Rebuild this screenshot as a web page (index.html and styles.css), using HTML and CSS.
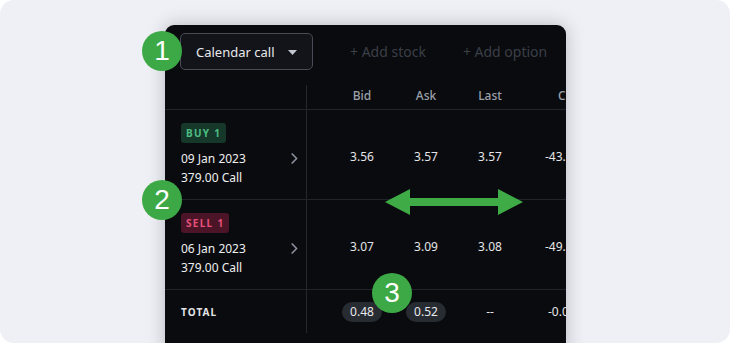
FILE: index.html
```html
<!DOCTYPE html>
<html>
<head>
<meta charset="utf-8">
<link rel="stylesheet" href="styles.css">
</head>
<body>
<div class="frame">
  <div class="panel">
    <div class="toolbar">
      <div class="dropdown">
        <span>Calendar call</span>
        <svg class="caret" width="9" height="5" viewBox="0 0 9 5"><path d="M0 0 H9 L4.5 5 Z" fill="#c3c7cf"/></svg>
      </div>
      <span class="add">+ Add stock</span>
      <span class="add">+ Add option</span>
    </div>
    <div class="row head">
      <div class="leg"></div>
      <div class="cells">
        <div class="cell">Bid</div>
        <div class="cell">Ask</div>
        <div class="cell">Last</div>
        <div class="cell tail h">Change</div>
      </div>
    </div>
    <div class="row body">
      <div class="leg">
        <div class="leg-info">
          <span class="badge buy">BUY 1</span>
          <div class="line">09 Jan 2023</div>
          <div class="line">379.00 Call</div>
        </div>
        <svg class="chev" width="7" height="11" viewBox="0 0 7 11"><path d="M1.2 1 L5.6 5.5 L1.2 10" fill="none" stroke="#8a8f9c" stroke-width="1.7" stroke-linecap="round" stroke-linejoin="round"/></svg>
      </div>
      <div class="cells">
        <div class="cell">3.56</div>
        <div class="cell">3.57</div>
        <div class="cell">3.57</div>
        <div class="cell tail">-43.12%</div>
      </div>
    </div>
    <div class="row body">
      <div class="leg">
        <div class="leg-info">
          <span class="badge sell">SELL 1</span>
          <div class="line">06 Jan 2023</div>
          <div class="line">379.00 Call</div>
        </div>
        <svg class="chev" width="7" height="11" viewBox="0 0 7 11"><path d="M1.2 1 L5.6 5.5 L1.2 10" fill="none" stroke="#8a8f9c" stroke-width="1.7" stroke-linecap="round" stroke-linejoin="round"/></svg>
      </div>
      <div class="cells">
        <div class="cell">3.07</div>
        <div class="cell">3.09</div>
        <div class="cell">3.08</div>
        <div class="cell tail">-49.30%</div>
      </div>
    </div>
    <div class="row total">
      <div class="leg"><span class="total-label">TOTAL</span></div>
      <div class="cells">
        <div class="cell"><span class="pill">0.48</span></div>
        <div class="cell"><span class="pill">0.52</span></div>
        <div class="cell">--</div>
        <div class="cell tail t">-0.05</div>
      </div>
    </div>
  </div>

  <div class="marker m1">1</div>
  <div class="marker m2">2</div>
  <div class="marker m3">3</div>
  <svg class="arrow" width="138" height="26" viewBox="0 0 138 26">
    <path d="M0 13 L25 0 L25 9 L113 9 L113 0 L138 13 L113 26 L113 17 L25 17 L25 26 Z" fill="#3fab47"/>
  </svg>
</div>
</body>
</html>
```

FILE: styles.css
```css
html, body {
  margin: 0;
  padding: 0;
  background: #ffffff;
}
.frame {
  position: relative;
  width: 730px;
  height: 343px;
  background: #eff0f5;
  border-radius: 14px;
  overflow: hidden;
  font-family: "Noto Sans", "Open Sans", sans-serif;
}
.panel {
  margin-left: 165px;
  margin-top: 25px;
  width: 401px;
  height: 330px;
  background: #0a0b0e;
  border-radius: 9px 9px 0 0;
  box-shadow: 0 0 18px rgba(40, 44, 60, 0.28);
  overflow: hidden;
  display: flex;
  flex-direction: column;
}
.toolbar {
  display: flex;
  align-items: center;
  padding: 8px 0 0 15px;
  height: 37px;
  gap: 37px;
  flex-shrink: 0;
}
.dropdown {
  box-sizing: border-box;
  width: 133px;
  height: 37px;
  border: 1px solid #464b56;
  border-radius: 5px;
  background: #121419;
  display: flex;
  align-items: center;
  justify-content: space-between;
  padding: 0 15px 0 15px;
  color: #e8e9ec;
  font-size: 13px;
  flex-shrink: 0;
}
.caret {
  display: block;
  margin-top: 1px;
}
.add {
  color: #3a3f48;
  font-size: 14px;
  white-space: nowrap;
  flex-shrink: 0;
}
.row {
  display: flex;
  border-bottom: 1px solid #20252c;
  flex-shrink: 0;
  width: 401px;
}
.leg {
  box-sizing: border-box;
  width: 142px;
  flex-shrink: 0;
  border-right: 1px solid #23272e;
  padding-left: 16px;
  padding-right: 8px;
  display: flex;
  align-items: center;
  justify-content: space-between;
}
.cells {
  flex: 1;
  min-width: 0;
  display: flex;
  align-items: center;
  padding-left: 23px;
  overflow: hidden;
}
.cell {
  width: 64px;
  text-align: center;
  font-size: 12px;
  color: #e4e5e8;
  flex-shrink: 0;
}
.cell.tail {
  width: auto;
  text-align: left;
  padding-left: 23px;
  white-space: nowrap;
}
.cell.tail.h {
  padding-left: 36px;
}
.cell.tail.t {
  padding-left: 26px;
}
.head {
  margin-top: 15px;
  height: 24px;
}
.head .cells {
  align-items: flex-start;
  padding-top: 2px;
}
.head .cell {
  color: #9ca1ab;
  font-weight: 500;
}
.body {
  height: 89px;
}
.body .leg {
  align-items: flex-start;
}
.leg-info {
  padding-top: 13px;
  display: flex;
  flex-direction: column;
  align-items: flex-start;
}
.chev {
  display: block;
  margin-top: 43px;
}
.body .cells {
  padding-top: 4px;
}
.badge {
  display: block;
  height: 20px;
  line-height: 20px;
  padding: 0 5px 0 5px;
  border-radius: 3px;
  font-size: 10px;
  font-weight: 700;
  letter-spacing: 1.3px;
  margin-bottom: 6px;
}
.buy {
  background: #15382a;
  color: #4dbd83;
}
.sell {
  background: #4b1527;
  color: #e5507c;
}
.line {
  font-size: 12px;
  color: #eeeff1;
  line-height: 19px;
}
.total {
  border-bottom: none;
  height: 43px;
}
.total-label {
  font-size: 10px;
  font-weight: 700;
  letter-spacing: 1.1px;
  color: #e2e3e6;
}
.pill {
  display: inline-block;
  height: 20px;
  line-height: 20px;
  padding: 0 8px;
  border-radius: 10px;
  background: #272b32;
  color: #e8e9ec;
}
.marker {
  position: absolute;
  width: 40px;
  height: 40px;
  border-radius: 50%;
  background: #3da946;
  color: #ffffff;
  font-family: "Liberation Sans", Arial, sans-serif;
  font-size: 28px;
  line-height: 40px;
  text-align: center;
}
.m1 { left: 142px; top: 31px; }
.m2 { left: 142px; top: 180px; }
.m3 { left: 372px; top: 273px; }
.arrow {
  position: absolute;
  left: 385px;
  top: 189px;
}
```
